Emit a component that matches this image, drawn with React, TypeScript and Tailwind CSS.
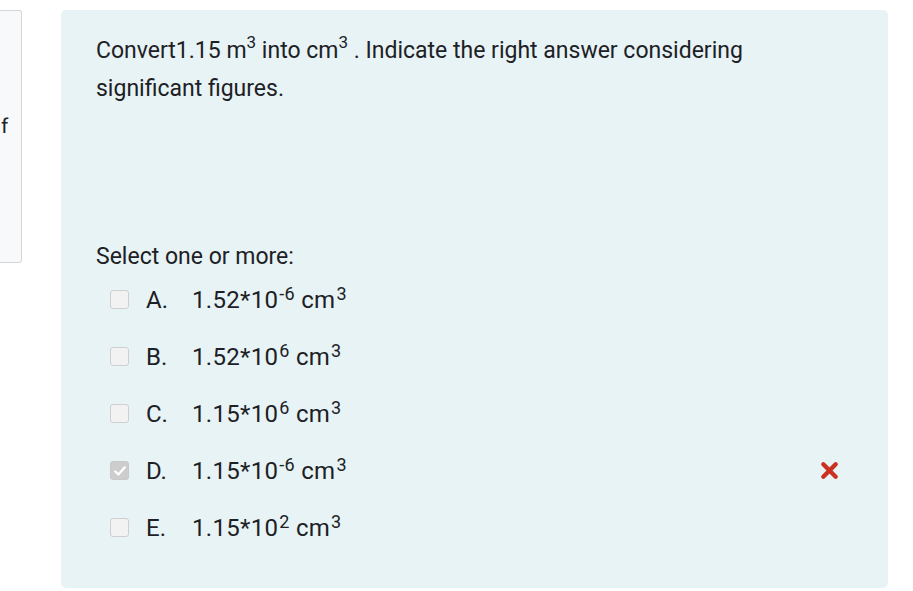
import React from 'react';

const options = [
  { letter: 'A.', base: '1.52*10', exp: '-6', checked: false, wrong: false },
  { letter: 'B.', base: '1.52*10', exp: '6', checked: false, wrong: false },
  { letter: 'C.', base: '1.15*10', exp: '6', checked: false, wrong: false },
  { letter: 'D.', base: '1.15*10', exp: '-6', checked: true, wrong: true },
  { letter: 'E.', base: '1.15*10', exp: '2', checked: false, wrong: false },
];

function Checkbox({ checked }: { checked: boolean }) {
  return (
    <div
      className={
        checked
          ? 'w-[19px] h-[19px] rounded-[3px] border border-[#c9c9c9] bg-[#cdcdcd] flex items-center justify-center'
          : 'w-[19px] h-[19px] rounded-[3px] border border-[#cfcfcf] bg-[#f2f2f2] flex items-center justify-center'
      }
    >
      {checked && (
        <svg width="14" height="14" viewBox="0 0 16 16">
          <path d="M2.5 8.5 L6.2 12 L13.5 3.8" fill="none" stroke="#ffffff" strokeWidth="2.6" strokeLinecap="round" strokeLinejoin="round" />
        </svg>
      )}
    </div>
  );
}

export default function App() {
  return (
    <div className="w-[913px] h-[591px] bg-white flex items-start pt-[10px] font-['Roboto',sans-serif] text-[#1d2125] overflow-hidden">
      {/* left info panel, mostly cut off */}
      <div className="w-[22px] h-[253px] bg-[#f8f9fa] border border-[#d6d6d6] rounded-r-[3px] border-l-0 flex items-center">
        <span className="text-[21px] ml-[1px] -mt-[19px]">f</span>
      </div>

      {/* question content */}
      <div className="ml-[39px] w-[827px] h-[578px] bg-[#e7f3f5] rounded-[5px] pl-[35px] pt-[22px]">
        <div className="text-[23px] leading-[38px] w-[700px]">
          Convert1.15 m<sup className="text-[17px] -top-[10px]">3</sup> into cm<sup className="text-[17px] -top-[10px]">3</sup> . Indicate the right answer considering significant figures.
        </div>

        <div className="text-[23px] leading-[30px] mt-[134px]">Select one or more:</div>

        <div className="-mt-[1px] flex flex-col">
          {options.map((o) => (
            <div key={o.letter} className="h-[57px] flex items-center pl-[14px] relative">
              <Checkbox checked={o.checked} />
              <span className="text-[24px] ml-[17px] w-[46px]">{o.letter}</span>
              <span className="text-[24px] tracking-[0.3px]">
                {o.base}
                <sup className="text-[18px] -top-[8px] ml-[1px]">{o.exp}</sup> cm<sup className="text-[18px] -top-[8px] ml-[1px]">3</sup>
              </span>
              {o.wrong && (
                <svg className="absolute left-[724px]" width="19" height="19" viewBox="0 0 20 20">
                  <path d="M3.5 3.5 L16.5 16.5 M16.5 3.5 L3.5 16.5" stroke="#ca3120" strokeWidth="4.6" strokeLinecap="round" />
                </svg>
              )}
            </div>
          ))}
        </div>
      </div>
    </div>
  );
}
